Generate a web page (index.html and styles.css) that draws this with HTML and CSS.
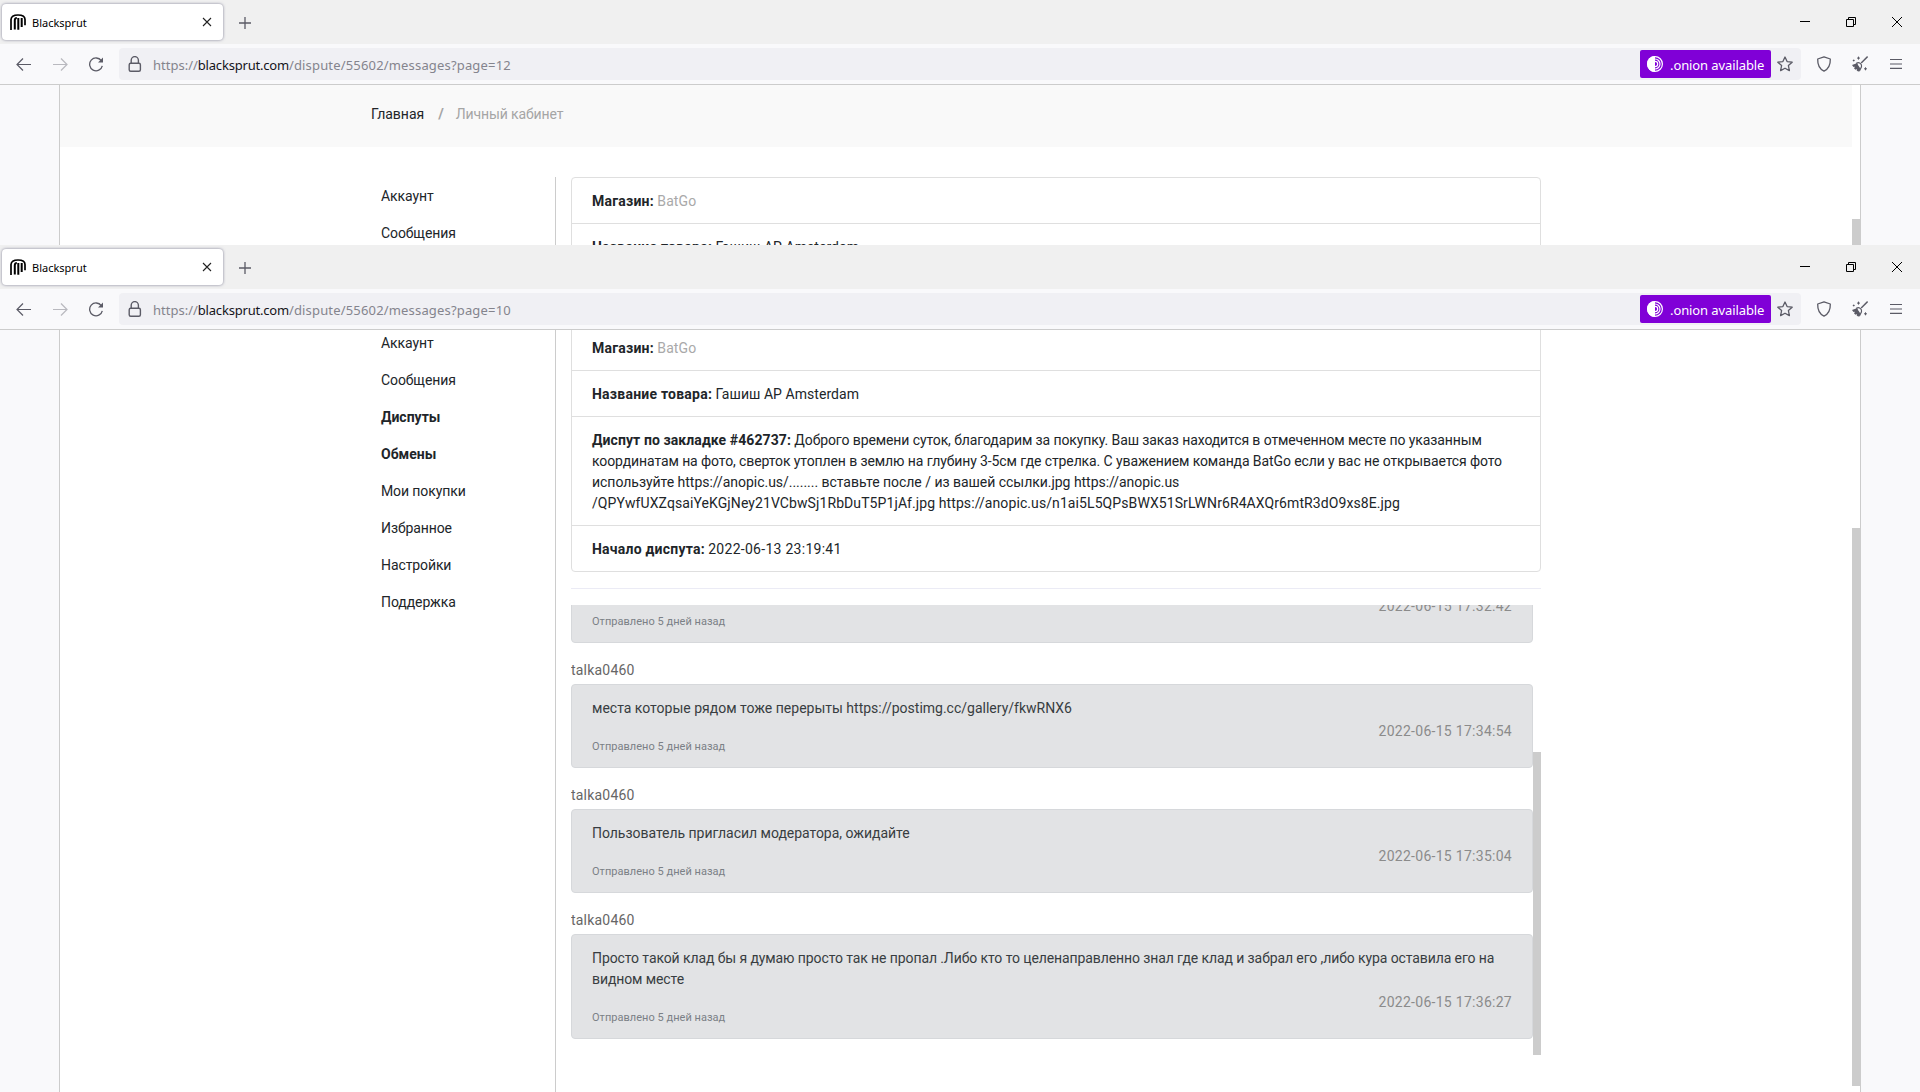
FILE: index.html
```html
<!DOCTYPE html>
<html lang="ru">
<head>
  <meta charset="UTF-8" />
  <title>Blacksprut</title>
  <link rel="stylesheet" href="styles.css">
</head>
<body>

  <!-- Shared icons -->
  <svg class="sprite" xmlns="http://www.w3.org/2000/svg">
    <symbol id="logo" viewBox="0 0 16 16">
      <path d="M1 16V5.500C1.300 2.200 4 1 8 1s7 1.200 7 4.500v5.700" fill="none" stroke="#000" stroke-width="1.700"/>
      <path d="M4.800 15.500V6.200c0-1.700 1-2.200 2-2.200M8.300 15.800V4M11.700 13V4" fill="none" stroke="#000" stroke-width="2"/>
    </symbol>
    <symbol id="x" viewBox="0 0 10 10">
      <path d="M1 1l8 8M9 1L1 9" fill="none" stroke="#222" stroke-width="1.100"/>
    </symbol>
    <symbol id="plus" viewBox="0 0 12 12">
      <path d="M6 0v12M0 6h12" fill="none" stroke="#5b5b66" stroke-width="1.300"/>
    </symbol>
    <symbol id="minimize" viewBox="0 0 10 10">
      <path d="M0 4.500h10" fill="none" stroke="#000"/>
    </symbol>
    <symbol id="restore" viewBox="0 0 10 10">
      <path d="M.5 2.500h7v7h-7zM2.500 2.500v-2h7v7h-2" fill="none" stroke="#000"/>
    </symbol>
    <symbol id="close" viewBox="0 0 10 10">
      <path d="M0 0l10 10M10 0L0 10" fill="none" stroke="#000"/>
    </symbol>
    <symbol id="back" viewBox="0 0 16 16">
      <path d="M15 8.500H1.500M7 2.500l-6 6 6 6" fill="none" stroke="currentColor" stroke-width="1.200"/>
    </symbol>
    <symbol id="forward" viewBox="0 0 16 16">
      <path d="M1 8.500h13.500M9 2.500l6 6-6 6" fill="none" stroke="currentColor" stroke-width="1.200"/>
    </symbol>
    <symbol id="reload" viewBox="0 0 16 16">
      <path d="M13.300 4.700A6.400 6.400 0 1 0 14.300 9.800" fill="none" stroke="currentColor" stroke-width="1.300"/>
      <path d="M15 1.500v5H10z" fill="currentColor"/>
    </symbol>
    <symbol id="lock" viewBox="0 0 16 16">
      <rect x="2.200" y="7.200" width="11.200" height="8" rx="1.500" fill="none" stroke="currentColor" stroke-width="1.400"/>
      <path d="M4.200 7V4.200a3.600 3.600 0 0 1 7.200 0V7" fill="none" stroke="currentColor" stroke-width="1.400"/>
    </symbol>
    <symbol id="onion" viewBox="0 0 16 16">
      <circle cx="8" cy="8" r="7.400" fill="none" stroke="#fff" stroke-width="1.200"/>
      <path d="M8 0a8 8 0 0 0 0 16z" fill="#fff"/>
      <path d="M8 3a5 5 0 0 1 0 10M8 5.300a2.700 2.700 0 0 1 0 5.400" fill="none" stroke="#fff" stroke-width="1.200"/>
    </symbol>
    <symbol id="star" viewBox="0 0 16 16">
      <path d="M8 1l2.100 4.600 5.100.6-3.800 3.400 1 5L8 12.200l-4.400 2.400 1-5L.8 6.200l5.100-.6z" fill="none" stroke="currentColor" stroke-width="1.300" stroke-linejoin="round"/>
    </symbol>
    <symbol id="shield" viewBox="0 0 16 16">
      <path d="M8 .8L14.300 3c.2 5.500-1.500 9.800-6.300 12.200C3.200 12.800 1.500 8.500 1.700 3z" fill="none" stroke="currentColor" stroke-width="1.300" stroke-linejoin="round"/>
    </symbol>
    <symbol id="broom" viewBox="0 0 16 16">
      <path d="M15.600.6L9.200 7" stroke="currentColor" stroke-width="1.400"/>
      <path d="M4.800 7c2.200-1.400 5.400 1.200 4.700 3.800L7.700 14.500 5 9z" fill="none" stroke="currentColor" stroke-width="1.200"/>
      <path d="M0 9l4.800-1.800 3.400 5-1.700 3.500-1.800-1.200.2-1.500-1.500.7-1.400-1.500 1.100-1.400-1.600.1z" fill="currentColor"/>
      <path d="M6.500.6v3M5 2.100h3M13.500 11.300v3M12 12.800h3M.8 4.500h1.800M1.700 3.600v1.800" stroke="currentColor"/>
    </symbol>
    <symbol id="menu" viewBox="0 0 16 16">
      <path d="M2 3.500h12M2 8h12M2 12.300h12" fill="none" stroke="currentColor" stroke-width="1.200"/>
    </symbol>
  </svg>

  <div class="window window-back">
    <div class="tabbar">
      <div class="tab">
        <svg class="favicon"><use href="#logo"/></svg>
        <span class="tab-title">Blacksprut</span>
        <svg class="tab-close"><use href="#x"/></svg>
      </div>
      <svg class="new-tab"><use href="#plus"/></svg>
      <div class="controls">
        <svg><use href="#minimize"/></svg>
        <svg><use href="#restore"/></svg>
        <svg><use href="#close"/></svg>
      </div>
    </div>
    <div class="navbar">
      <svg class="icon"><use href="#back"/></svg>
      <svg class="icon disabled"><use href="#forward"/></svg>
      <svg class="icon"><use href="#reload"/></svg>
      <div class="urlbar">
        <svg class="icon"><use href="#lock"/></svg>
        <div class="url"><span>https://</span><span class="host">blacksprut.com</span><span class="path">/dispute/55602/messages?page=12</span></div>
        <div class="onion"><svg class="icon"><use href="#onion"/></svg><span>.onion available</span></div>
        <svg class="icon"><use href="#star"/></svg>
      </div>
      <svg class="icon"><use href="#shield"/></svg>
      <svg class="icon"><use href="#broom"/></svg>
      <svg class="icon"><use href="#menu"/></svg>
    </div>
    <div class="viewport">
      <div class="page">
        <div class="scrolled">
          <div class="breadcrumb">
            <a class="current">Главная</a><span class="slash">/</span><a>Личный кабинет</a>
          </div>
          <div class="content">
            <ul class="sidebar">
              <li>Аккаунт</li>
              <li>Сообщения</li>
            </ul>
            <div class="main">
              <div class="card">
                <div class="row"><b>Магазин:</b> <a>BatGo</a></div>
                <div class="row"><b>Название товара:</b> <span class="product">Гашиш AP Amsterdam</span></div>
              </div>
            </div>
          </div>
        </div>
        <div class="page-thumb"></div>
      </div>
    </div>
  </div>

  <div class="window window-front">
    <div class="tabbar">
      <div class="tab">
        <svg class="favicon"><use href="#logo"/></svg>
        <span class="tab-title">Blacksprut</span>
        <svg class="tab-close"><use href="#x"/></svg>
      </div>
      <svg class="new-tab"><use href="#plus"/></svg>
      <div class="controls">
        <svg><use href="#minimize"/></svg>
        <svg><use href="#restore"/></svg>
        <svg><use href="#close"/></svg>
      </div>
    </div>
    <div class="navbar">
      <svg class="icon"><use href="#back"/></svg>
      <svg class="icon disabled"><use href="#forward"/></svg>
      <svg class="icon"><use href="#reload"/></svg>
      <div class="urlbar">
        <svg class="icon"><use href="#lock"/></svg>
        <div class="url"><span>https://</span><span class="host">blacksprut.com</span><span class="path">/dispute/55602/messages?page=10</span></div>
        <div class="onion"><svg class="icon"><use href="#onion"/></svg><span>.onion available</span></div>
        <svg class="icon"><use href="#star"/></svg>
      </div>
      <svg class="icon"><use href="#shield"/></svg>
      <svg class="icon"><use href="#broom"/></svg>
      <svg class="icon"><use href="#menu"/></svg>
    </div>
    <div class="viewport">
      <div class="page">
        <div class="scrolled">
          <div class="content">
            <ul class="sidebar">
              <li>Аккаунт</li>
              <li>Сообщения</li>
              <li class="active">Диспуты</li>
              <li class="active">Обмены</li>
              <li>Мои покупки</li>
              <li>Избранное</li>
              <li>Настройки</li>
              <li>Поддержка</li>
            </ul>
            <div class="main">
              <div class="card">
                <div class="row"><b>Магазин:</b> <a>BatGo</a></div>
                <div class="row"><b>Название товара:</b> <span class="product">Гашиш AP Amsterdam</span></div>
                <div class="row"><b class="order">Диспут по закладке #462737:</b> Доброго времени суток, благодарим за покупку. Ваш заказ находится в отмеченном месте по указанным<br>координатам на фото, сверток утоплен в землю на глубину 3-5см где стрелка. С уважением команда BatGo если у вас не открывается фото<br><span class="link-line">используйте https://anopic.us/........ вставьте после / из вашей ссылки.jpg https://anopic.us</span><br><span class="hash">/QPYwfUXZqsaiYeKGjNey21VCbwSj1RbDuT5P1jAf.jpg https://anopic.us/n1ai5L5QPsBWX51SrLWNr6R4AXQr6mtR3dO9xs8E.jpg</span></div>
                <div class="row"><b>Начало диспута:</b> <span class="date">2022-06-13 23:19:41</span></div>
              </div>
              <hr>
              <div class="messages">
                <div class="list">
                  <div class="message">
                    <p class="time">2022-06-15 17:32:42</p>
                    <small>Отправлено 5 дней назад</small>
                  </div>
                  <div class="user">talka0460</div>
                  <div class="message">
                    <p class="with-link">места которые рядом тоже перерыты https://postimg.cc/gallery/fkwRNX6</p>
                    <p class="time">2022-06-15 17:34:54</p>
                    <small>Отправлено 5 дней назад</small>
                  </div>
                  <div class="user">talka0460</div>
                  <div class="message">
                    <p class="link-line">Пользователь пригласил модератора, ожидайте</p>
                    <p class="time">2022-06-15 17:35:04</p>
                    <small>Отправлено 5 дней назад</small>
                  </div>
                  <div class="user">talka0460</div>
                  <div class="message">
                    <p>Просто такой клад бы я думаю просто так не пропал .Либо кто то целенаправленно знал где клад и забрал его ,либо кура оставила его на<br>видном месте</p>
                    <p class="time">2022-06-15 17:36:27</p>
                    <small>Отправлено 5 дней назад</small>
                  </div>
                </div>
                <div class="list-thumb"></div>
              </div>
            </div>
          </div>
        </div>
        <div class="page-thumb"></div>
      </div>
    </div>
  </div>

</body>
</html>
```
FILE: styles.css
```css
* {
  box-sizing: border-box;
}

body {
  margin: 0;
  height: 1092px;
  overflow: hidden;
  display: flex;
  flex-direction: column;
  font-family: 'Noto Sans', 'Open Sans', sans-serif;
  background: #f9f9fb;
}

.sprite {
  display: none;
}

svg {
  flex: none;
  display: block;
}

/* Browser windows */
.window {
  display: flex;
  flex-direction: column;
  overflow: hidden;
}

.window-back {
  height: 245px;
}

.window-front {
  height: 847px;
}

.tabbar {
  flex: none;
  height: 44px;
  background: #f0f0f0;
  display: flex;
  align-items: center;
  padding: 0 18px 0 2px;
}

.tab {
  width: 221px;
  height: 36px;
  background: #fff;
  border-radius: 4px;
  box-shadow: 0 0 3px rgba(80, 80, 110, 0.7);
  display: flex;
  align-items: center;
  padding: 0 11px 0 8px;
}

.favicon {
  width: 16px;
  height: 16px;
}

.tab-title {
  flex: 1;
  margin-left: 6px;
  font-size: 11px;
  color: #000;
}

.tab-close {
  width: 10px;
  height: 10px;
}

.new-tab {
  width: 12px;
  height: 12px;
  margin: 1px 0 0 16px;
}

.controls {
  margin-left: auto;
  display: flex;
  gap: 36px;
}

.controls svg {
  width: 10px;
  height: 10px;
}

.navbar {
  flex: none;
  height: 41px;
  border-bottom: 1px solid #ccc;
  display: flex;
  align-items: center;
  gap: 20px;
  padding: 0 16px;
  color: #5b5b66;
}

.icon {
  width: 16px;
  height: 16px;
}

.disabled {
  opacity: 0.4;
}

.urlbar {
  flex: 1;
  height: 32px;
  margin: 0 -5px;
  background: #f0f0f4;
  border-radius: 4px;
  display: flex;
  align-items: center;
  padding: 0 8px;
}

.url {
  flex: 1;
  margin-left: 10px;
  padding-top: 2px;
  font-size: 13px;
  color: #84848d;
}

.host {
  color: #15141a;
  letter-spacing: -0.2px;
}

.path {
  letter-spacing: 0.17px;
}

.onion {
  width: 131px;
  height: 28px;
  margin-right: 6px;
  padding-left: 7px;
  background: #8000d7;
  border-radius: 2px;
  color: #fff;
  font-size: 13px;
  letter-spacing: -0.1px;
  display: flex;
  align-items: center;
  gap: 7px;
}

.onion span {
  padding-top: 2px;
}

/* Page area with side margins */
.viewport {
  flex: 1;
  min-height: 0;
  padding: 0 59px;
}

.page {
  width: 1802px;
  height: 100%;
  overflow: hidden;
  position: relative;
  background: #fff;
  border: solid #ccc;
  border-width: 0 1px;
  font-family: Roboto, sans-serif;
  font-size: 14px;
  line-height: 21px;
  letter-spacing: -0.1px;
  color: #212529;
}

.window-front .scrolled {
  margin-top: -6px;
}

.page-thumb {
  position: absolute;
  right: 0;
  top: 134px;
  width: 8px;
  height: 600px;
  background: #ccc;
}

.window-front .page-thumb {
  top: 198px;
  height: 558px;
}

.breadcrumb {
  width: 1792px;
  height: 62px;
  margin-bottom: 30px;
  padding: 19px 0 0 311px;
  background: #f9f9f9;
  color: #a5a5a5;
}

.breadcrumb .current {
  color: #212529;
  letter-spacing: 0;
}

.slash {
  margin: 0 12px 0 14px;
  font-size: 15px;
  font-weight: bold;
}

.content {
  display: flex;
  padding-left: 321px;
}

.sidebar {
  width: 175px;
  height: 1000px;
  margin: 0;
  padding: 0;
  border-right: 1px solid #ccc;
  list-style: none;
}

.sidebar li {
  height: 37px;
  padding-top: 9px;
}

.sidebar .active {
  font-weight: bold;
  letter-spacing: 0;
}

b {
  letter-spacing: 0.23px;
}

.order {
  letter-spacing: 0.09px;
}

.main {
  width: 970px;
  margin-left: 15px;
}

.card {
  border: 1px solid #dfdfdf;
  border-radius: 4px;
}

.row {
  padding: 13px 20px 11px;
  border-bottom: 1px solid #dfdfdf;
  white-space: nowrap;
}

.row:last-child {
  border-bottom: none;
}

.row a {
  letter-spacing: 0.1px;
  color: #a9a9a9;
}

.product {
  letter-spacing: 0.05px;
}

.link-line {
  letter-spacing: -0.03px;
}

.with-link {
  letter-spacing: 0;
}

.hash {
  letter-spacing: 0.09px;
}

.date,
.time {
  letter-spacing: 0.28px;
}

hr {
  margin: 16px 0;
  border: none;
  border-top: 1px solid #ebebf5;
}

/* Dispute messages, scrolled to the end */
.messages {
  height: 450px;
  overflow: hidden;
  position: relative;
  display: flex;
  align-items: flex-end;
  padding-bottom: 16px;
}

.list {
  width: 962px;
}

.message {
  padding: 13px 20px 15px;
  background: #e2e3e5;
  border: 1px solid #d6d8db;
  border-radius: 4px;
  color: #383d41;
  white-space: nowrap;
}

.message p {
  margin: 0;
}

.message .time {
  height: 22px;
  line-height: 24px;
  text-align: right;
  color: #8b8b8b;
}

.message small {
  display: block;
  font-size: 11px;
  line-height: 11px;
  letter-spacing: 0.03px;
  color: #7b8086;
}

.user {
  margin: 17px 0 3px;
  letter-spacing: 0.2px;
  color: #666;
}

.list-thumb {
  position: absolute;
  right: 0;
  bottom: 0;
  width: 8px;
  height: 303px;
  background: #ccc;
}
```
